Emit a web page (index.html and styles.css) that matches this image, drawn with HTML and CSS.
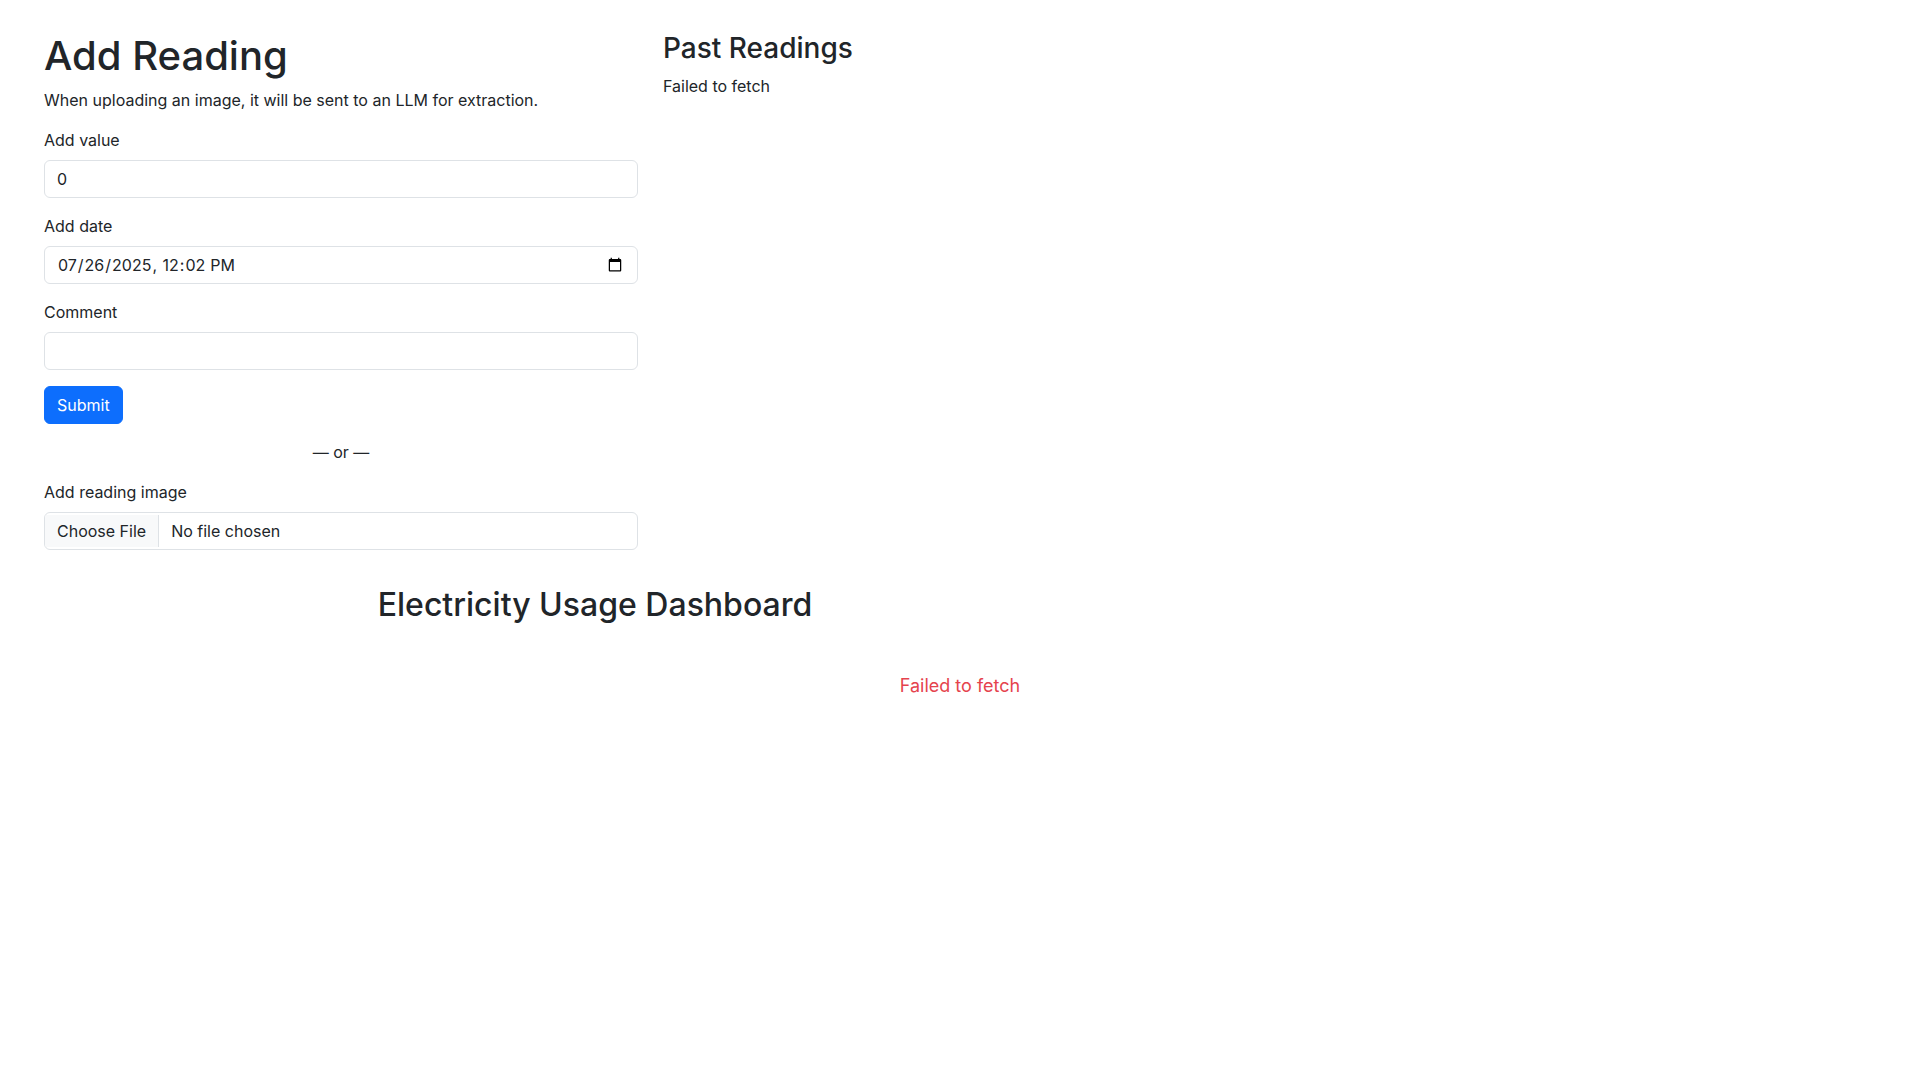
FILE: index.html
```html
<!DOCTYPE html>
<html lang="en">
<head>
<meta charset="utf-8">
<title>Electricity Usage Dashboard</title>
<link rel="stylesheet" href="styles.css">
</head>
<body>
<div class="page">
  <div class="top-row">
    <section class="add-col">
      <h1 class="h1">Add Reading</h1>
      <p class="lead-note">When uploading an image, it will be sent to an LLM for extraction.</p>
      <form class="reading-form">
        <div class="field">
          <label class="form-label" for="value">Add value</label>
          <input class="form-control" id="value" type="number" value="0">
        </div>
        <div class="field">
          <label class="form-label" for="date">Add date</label>
          <input class="form-control date-control" id="date" type="datetime-local" value="2025-07-26T12:02">
        </div>
        <div class="field">
          <label class="form-label" for="comment">Comment</label>
          <input class="form-control" id="comment" type="text">
        </div>
        <button class="btn-primary" type="button">Submit</button>
      </form>
      <div class="or-sep">— or —</div>
      <div class="field">
        <label class="form-label" for="image">Add reading image</label>
        <input class="form-control file-control" id="image" type="file">
      </div>
    </section>
    <section class="past-col">
      <h3 class="h3">Past Readings</h3>
      <p class="plain">Failed to fetch</p>
    </section>
  </div>
  <div class="dashboard">
    <h2 class="h2 dash-title">Electricity Usage Dashboard</h2>
    <div class="dash-error">Failed to fetch</div>
  </div>
</div>
</body>
</html>
```

FILE: styles.css
```css
* { box-sizing: border-box; }
html, body { margin: 0; padding: 0; background: #fff; }
body {
  font-family: Inter, "Noto Sans", "Liberation Sans", sans-serif;
  font-size: 16px;
  line-height: 1.5;
  color: #212529;
}
.page { padding: 32px 44px 0 44px; }
.top-row { display: flex; gap: 25px; align-items: flex-start; }
.add-col { width: 594px; flex: none; }
.past-col { flex: 1; }
.h1 { font-size: 40px; font-weight: 500; line-height: 1.2; margin: 0 0 8px 0; }
.h2 { font-size: 32px; font-weight: 500; line-height: 1.2; margin: 0 0 8px 0; }
.h3 { font-size: 28px; font-weight: 500; line-height: 1.2; margin: 0 0 8px 0; }
.lead-note, .plain { margin: 0 0 16px 0; }
.field { margin-bottom: 16px; }
.form-label { display: inline-block; margin-bottom: 8px; }
.form-control {
  display: block;
  width: 100%;
  height: 38px;
  padding: 6px 12px;
  font-family: inherit;
  font-size: 16px;
  font-weight: 400;
  line-height: 1.5;
  color: #212529;
  background-color: #fff;
  border: 1px solid #dee2e6;
  border-radius: 6px;
  appearance: none;
  margin: 0;
}
.date-control::-webkit-date-and-time-value { min-width: 85px; height: 1.5em; margin: 0; text-align: left; }
.date-control::-webkit-datetime-edit { display: block; padding: 0; line-height: 24px; }
.date-control::-webkit-datetime-edit-fields-wrapper { padding: 0; }
input[type=number]::-webkit-inner-spin-button { opacity: 0; }
.file-control { overflow: hidden; }
.file-control::file-selector-button {
  padding: 6px 12px;
  margin: -6px 12px -6px -12px;
  font-family: inherit;
  font-size: 16px;
  color: #212529;
  background-color: #f8f9fa;
  border: 0 solid #dee2e6;
  border-right-width: 1px;
  border-radius: 0;
}
.btn-primary {
  display: inline-block;
  padding: 6px 12px;
  font-family: inherit;
  font-size: 16px;
  line-height: 1.5;
  color: #fff;
  background-color: #0d6efd;
  border: 1px solid #0d6efd;
  border-radius: 6px;
  margin: 0;
}
.or-sep { text-align: center; margin: 16px 0; }
.dashboard { margin-top: 20px; }
.dash-title { width: 1102px; text-align: center; }
.dash-error {
  text-align: center;
  color: #e5434d;
  font-size: 18px;
  line-height: 1.5;
  padding-top: 40px;
}
```
